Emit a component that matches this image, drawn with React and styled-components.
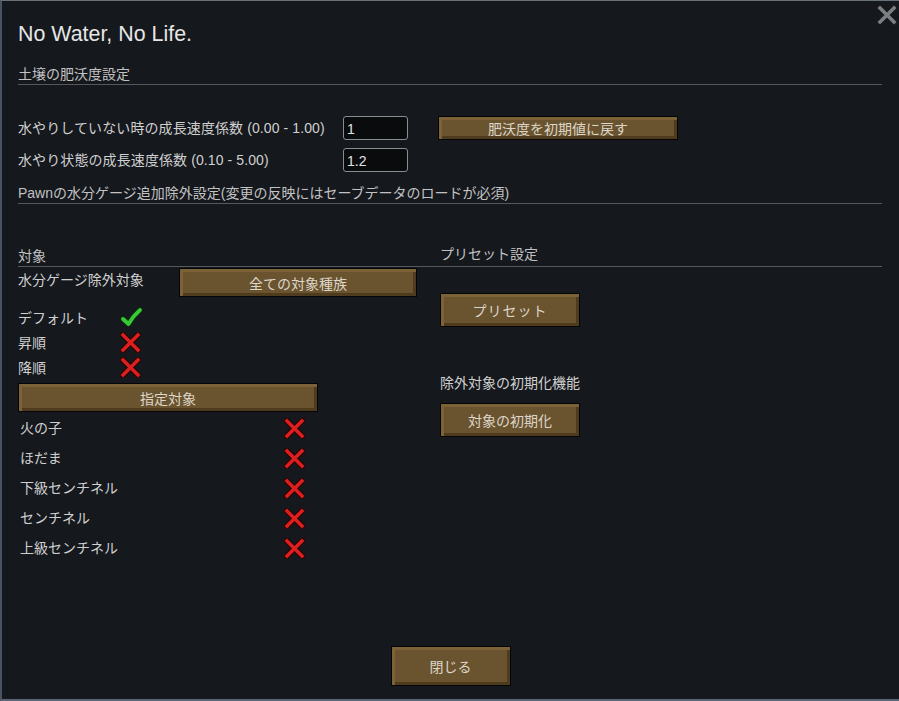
import React from "react";
import styled, { createGlobalStyle } from "styled-components";

const Global = createGlobalStyle`
  html, body { margin: 0; padding: 0; background: #15181d; overflow: hidden; }
  * { box-sizing: border-box; }
`;

const FONT = `"Liberation Sans", "Noto Sans CJK JP", sans-serif`;

const Window = styled.div`
  position: relative;
  width: 899px;
  height: 701px;
  background: #15181d;
  border-top: 1px solid #68717a;
  border-left: 2px solid #4a5360;
  border-bottom: 2px solid #5b6674;
  padding: 0 17px 0 16px;
  display: flex;
  flex-direction: column;
  font-family: ${FONT};
  color: #d0d0d0;
  font-size: 14px;
`;

const CloseX = styled.button`
  position: absolute;
  top: 4px;
  right: 2px;
  width: 20px;
  height: 20px;
  padding: 0;
  border: 0;
  background: transparent;
  display: flex;
`;

const Title = styled.h1`
  margin: 19px 0 0;
  font-size: 21.4px;
  line-height: 28px;
  font-weight: normal;
  color: #e6e6e6;
`;

const SectionHead = styled.div`
  margin-top: ${(p) => p.$mt}px;
  line-height: ${(p) => p.$lh || 20}px;
  padding-left: ${(p) => p.$pl || 0}px;
  padding-bottom: ${(p) => p.$pb || 0}px;
  border-bottom: 1px solid #56585b;
  color: #c2c2c2;
  white-space: nowrap;
`;

const FieldRow = styled.div`
  margin-top: ${(p) => p.$mt}px;
  height: 24px;
  display: flex;
  align-items: center;
`;

const FieldLabel = styled.span`
  width: 325px;
  line-height: 20px;
  white-space: nowrap;
  letter-spacing: 0.1px;
`;

const Field = styled.input`
  width: 65px;
  height: 24px;
  border: 1px solid #8a8c8f;
  border-radius: 3px;
  background: #0a0b0d;
  color: #e2e2e2;
  font-family: ${FONT};
  font-size: 14px;
  padding: 2px 0 0 3px;
  outline: none;
`;

const Button = styled.button`
  width: ${(p) => p.$w}px;
  height: ${(p) => p.$h}px;
  margin-left: ${(p) => p.$ml || 0}px;
  margin-top: ${(p) => p.$mt || 0}px;
  flex: none;
  border: 1px solid #050505;
  background: #6a532f;
  box-shadow: inset 3px 3px 0 #7b6237, inset -3px -3px 0 #4f3c1e;
  color: #dcd6c8;
  font-family: ${FONT};
  font-size: 14px;
  padding: 0;
  letter-spacing: ${(p) => p.$ls || 0}px;
  cursor: pointer;
`;

const Columns = styled.div`
  margin-top: 42px;
  display: grid;
  grid-template-columns: 402px 1fr;
`;

const Column = styled.div`
  display: flex;
  flex-direction: column;
  align-items: flex-start;
`;

const Stretch = styled.div`
  align-self: stretch;
`;

const ExclRow = styled.div`
  margin-top: 1px;
  display: flex;
  align-items: flex-start;
`;

const ExclLabel = styled.span`
  width: 161px;
  margin-top: 2px;
  line-height: 20px;
  white-space: nowrap;
`;

const StatusList = styled.div`
  margin-top: 8px;
  display: flex;
  flex-direction: column;
`;

const StatusRow = styled.div`
  height: 25px;
  display: grid;
  grid-template-columns: 102px 22px;
  align-items: center;
  line-height: 20px;
`;

const TargetList = styled.div`
  margin-top: 1px;
  display: flex;
  flex-direction: column;
`;

const TargetRow = styled.div`
  height: 30px;
  display: grid;
  grid-template-columns: 264px 21px;
  align-items: center;
  padding-left: 2px;
  line-height: 20px;
`;

const SubLabel = styled.div`
  margin-top: 46px;
  margin-left: 20px;
  line-height: 20px;
`;

const Footer = styled.div`
  margin-top: auto;
  margin-bottom: 13px;
  display: flex;
  justify-content: center;
  padding-left: 1px;
`;

const Check = () => (
  <svg width="23" height="21" viewBox="0 0 23 21">
    <path d="M3 12 L8.5 17 Q13 9 20 3" fill="none" stroke="#0c2a0c" strokeWidth="6.2" strokeLinecap="round" strokeLinejoin="round" />
    <path d="M3 12 L8.5 17 Q13 9 20 3" fill="none" stroke="#38c838" strokeWidth="3.8" strokeLinecap="round" strokeLinejoin="round" />
  </svg>
);

const Cross = () => (
  <svg width="21" height="21" viewBox="0 0 21 21">
    <path d="M3 3 L18 18 M18 3 L3 18" fill="none" stroke="#2a0606" strokeWidth="6" strokeLinecap="square" />
    <path d="M3 3 L18 18 M18 3 L3 18" fill="none" stroke="#dd1f1f" strokeWidth="3.4" strokeLinecap="square" />
  </svg>
);

const CloseIcon = () => (
  <svg width="20" height="20" viewBox="0 0 20 20">
    <path d="M3 3 L17 17 M17 3 L3 17" fill="none" stroke="#7c7e81" strokeWidth="3.6" strokeLinecap="square" />
  </svg>
);

const targets = ["火の子", "ほだま", "下級センチネル", "センチネル", "上級センチネル"];

export default function App() {
  return (
    <>
      <Global />
      <Window>
        <CloseX aria-label="close"><CloseIcon /></CloseX>
        <Title>No Water, No Life.</Title>
        <SectionHead $mt={16}>土壌の肥沃度設定</SectionHead>

        <FieldRow $mt={31}>
          <FieldLabel>水やりしていない時の成長速度係数 (0.00 - 1.00)</FieldLabel>
          <Field readOnly value="1" />
          <Button $w={240} $h={24} $ml={30}>肥沃度を初期値に戻す</Button>
        </FieldRow>
        <FieldRow $mt={8}>
          <FieldLabel>水やり状態の成長速度係数 (0.10 - 5.00)</FieldLabel>
          <Field readOnly value="1.2" />
        </FieldRow>

        <SectionHead $mt={11}>Pawnの水分ゲージ追加除外設定(変更の反映にはセーブデータのロードが必須)</SectionHead>

        <Columns>
          <Column>
            <Stretch>
              <SectionHead $mt={0}>対象</SectionHead>
            </Stretch>
            <ExclRow>
              <ExclLabel>水分ゲージ除外対象</ExclLabel>
              <Button $w={238} $h={29}>全ての対象種族</Button>
            </ExclRow>
            <StatusList>
              <StatusRow><span>デフォルト</span><Check /></StatusRow>
              <StatusRow><span>昇順</span><Cross /></StatusRow>
              <StatusRow><span>降順</span><Cross /></StatusRow>
            </StatusList>
            <Button $w={300} $h={29} $mt={3}>指定対象</Button>
            <TargetList>
              {targets.map((t) => (
                <TargetRow key={t}><span>{t}</span><Cross /></TargetRow>
              ))}
            </TargetList>
          </Column>
          <Column>
            <Stretch>
              <SectionHead $mt={0} $lh={16} $pb={4} $pl={20}>プリセット設定</SectionHead>
            </Stretch>
            <Button $w={140} $h={34} $ml={20} $mt={26} $ls={1}>プリセット</Button>
            <SubLabel>除外対象の初期化機能</SubLabel>
            <Button $w={140} $h={34} $ml={20} $mt={10}>対象の初期化</Button>
          </Column>
        </Columns>

        <Footer>
          <Button $w={120} $h={40}>閉じる</Button>
        </Footer>
      </Window>
    </>
  );
}
